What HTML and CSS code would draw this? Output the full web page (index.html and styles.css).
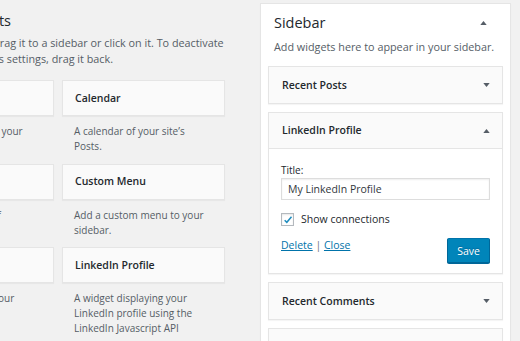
FILE: index.html
```html
<!DOCTYPE html>
<html lang="en">
<head>
  <meta charset="UTF-8" />
  <title>Widgets</title>
  <link rel="stylesheet" href="styles.css">
</head>
<body>
  <div class="widgets-screen">
    <section class="available">
      <h2 class="sidebar-name">Available Widgets</h2>
      <p class="intro">To activate a widget drag it to a sidebar or click on it. To deactivate a widget and delete its settings, drag it back.</p>
      <div class="widget-list">
        <div class="widget">
          <div class="widget-top"><h3>Archives</h3></div>
          <p class="widget-description">A monthly archive of your site’s Posts.</p>
        </div>
        <div class="widget">
          <div class="widget-top"><h3>Calendar</h3></div>
          <p class="widget-description">A calendar of your site’s Posts.</p>
        </div>
        <div class="widget">
          <div class="widget-top"><h3>Categories</h3></div>
          <p class="widget-description">A list or dropdown of categories.</p>
        </div>
        <div class="widget">
          <div class="widget-top"><h3>Custom Menu</h3></div>
          <p class="widget-description">Add a custom menu to your sidebar.</p>
        </div>
        <div class="widget">
          <div class="widget-top"><h3>Image</h3></div>
          <p class="widget-description">Shows an image of your choice.</p>
        </div>
        <div class="widget">
          <div class="widget-top"><h3>LinkedIn Profile</h3></div>
          <p class="widget-description">A widget displaying your LinkedIn profile using the LinkedIn Javascript API</p>
        </div>
      </div>
    </section>

    <section class="sidebar-panel">
      <div class="panel-head">
        <h2 class="sidebar-name">Sidebar</h2>
        <svg class="toggle" viewBox="0 0 8 5"><path d="M0 5L4 0L8 5z"/></svg>
      </div>
      <p class="sidebar-description">Add widgets here to appear in your sidebar.</p>

      <div class="sortables">
        <div class="widget-box">
          <div class="box-top">
            <h3>Recent Posts</h3>
            <svg class="toggle" viewBox="0 0 8 5"><path d="M0 0L8 0L4 5z"/></svg>
          </div>
        </div>

        <div class="widget-box open">
          <div class="box-top">
            <h3>LinkedIn Profile</h3>
            <svg class="toggle" viewBox="0 0 8 5"><path d="M0 5L4 0L8 5z"/></svg>
          </div>
          <div class="box-inside">
            <label class="field-label" for="liTitle">Title:</label>
            <input class="field" id="liTitle" type="text" value="My LinkedIn Profile">
            <label class="check-row">
              <span class="check">
                <svg viewBox="0 0 12 12"><path d="M2 6.2L4.6 8.8L10.2 2.2" /></svg>
              </span>
              Show connections
            </label>
            <div class="control-actions">
              <span class="links"><a href="#">Delete</a> <span class="sep">|</span> <a href="#">Close</a></span>
              <button class="save-button">Save</button>
            </div>
          </div>
        </div>

        <div class="widget-box">
          <div class="box-top">
            <h3>Recent Comments</h3>
            <svg class="toggle" viewBox="0 0 8 5"><path d="M0 0L8 0L4 5z"/></svg>
          </div>
        </div>

        <div class="widget-box">
          <div class="box-top">
            <h3>Archives</h3>
            <svg class="toggle" viewBox="0 0 8 5"><path d="M0 0L8 0L4 5z"/></svg>
          </div>
        </div>
      </div>
    </section>
  </div>
</body>
</html>
```

FILE: styles.css
```css
:root {
  --page: #f1f1f1;
  --box: #fafafa;
  --border: #e5e5e5;
  --text: #23282d;
  --muted: #555d66;
  --link: #0073aa;
}

* {
  margin: 0;
  padding: 0;
  box-sizing: border-box;
}

html, body {
  height: 100%;
  overflow: hidden;
}

body {
  background: var(--page);
  color: #444;
  font-family: 'Open Sans', sans-serif;
  font-size: 10px;
  line-height: 15px;
}

.widgets-screen {
  display: flex;
  align-items: flex-start;
}

/* lewa kolumna - dostępne widgety (ucięta z lewej) */
.available {
  width: 334px;
  flex-shrink: 0;
  margin-left: -109px;
}

.sidebar-name {
  font-size: 14.5px;
  font-weight: 400;
  line-height: 19px;
  color: var(--text);
}

/* tytuł ucięty przez krawędź - wyrównany do prawej, kończy się na x=11 */
.available .sidebar-name {
  width: 200px;
  margin-left: -80px;
  padding-top: 11px;
  text-align: right;
  white-space: nowrap;
}

.intro {
  padding-top: 5px;
  font-size: 10.8px;
  line-height: 16px;
  color: var(--muted);
}

.widget-list {
  display: grid;
  grid-template-columns: 163px 163px;
  column-gap: 8px;
  row-gap: 8.5px;
  margin-top: 13px;
}

.widget-top {
  height: 36px;
  display: flex;
  align-items: center;
  padding: 0 12px;
  background: var(--box);
  border: 1px solid var(--border);
  box-shadow: 0 1px 1px rgba(0, 0, 0, 0.04);
}

.widget-top h3,
.box-top h3 {
  font-size: 10.5px;
  font-weight: 600;
  color: var(--text);
}

.widget-description {
  height: 31px;
  margin-top: 8px;
  padding: 0 12px;
  color: var(--muted);
}

/* prawa kolumna - sidebar */
.sidebar-panel {
  width: 251px;
  flex-shrink: 0;
  margin: 3px 0 0 35px;
  min-height: 400px;
  background: #fff;
  border: 1px solid var(--border);
  box-shadow: 0 1px 1px rgba(0, 0, 0, 0.04);
  padding: 0 7px;
}

.panel-head {
  display: flex;
  align-items: center;
  justify-content: space-between;
  padding: 9px 16px 0 6px;
}

.sidebar-description {
  padding: 7px 0 0 6px;
  font-size: 10.8px;
  color: var(--muted);
}

.toggle {
  width: 7px;
  height: 4px;
  fill: var(--muted);
}

.sortables {
  display: flex;
  flex-direction: column;
  gap: 8px;
  margin-top: 12px;
}

.widget-box {
  background: var(--box);
  border: 1px solid var(--border);
  box-shadow: 0 1px 1px rgba(0, 0, 0, 0.04);
}

.box-top {
  height: 36px;
  display: flex;
  align-items: center;
  justify-content: space-between;
  padding: 0 12px 0 13px;
}

.widget-box.open .box-top {
  border-bottom: 1px solid var(--border);
}

.box-inside {
  background: #fff;
  padding: 14px 12px 10px;
}

.field-label {
  display: block;
  color: var(--text);
}

.field {
  display: block;
  width: 100%;
  height: 22px;
  padding: 0 6px;
  border: 1px solid #ddd;
  box-shadow: inset 0 1px 2px rgba(0, 0, 0, 0.07);
  font-family: inherit;
  font-size: 10.5px;
  color: #32373c;
  background: #fff;
}

.check-row {
  display: flex;
  align-items: center;
  gap: 7px;
  margin-top: 12px;
  color: var(--text);
  font-size: 10.5px;
}

.check {
  width: 13px;
  height: 13px;
  border: 1px solid #b4b9be;
  box-shadow: inset 0 1px 2px rgba(0, 0, 0, 0.1);
  background: #fff;
  display: flex;
  align-items: center;
  justify-content: center;
}

.check svg {
  width: 10px;
  height: 10px;
  fill: none;
  stroke: #1e8cbe;
  stroke-width: 1.8;
}

.control-actions {
  display: flex;
  justify-content: space-between;
  align-items: flex-start;
  margin-top: 11px;
}

.links {
  font-size: 10.5px;
}

.links a {
  color: var(--link);
}

.links .sep {
  color: #72777c;
}

.save-button {
  height: 25px;
  padding: 0 9px;
  background: #0085ba;
  border: 1px solid #0073aa;
  border-color: #0073aa #006799 #006799;
  border-radius: 2px;
  box-shadow: 0 1px 0 #006799;
  color: #fff;
  font-family: inherit;
  font-size: 10.5px;
  text-shadow: 0 -1px 1px #006799;
}
```
